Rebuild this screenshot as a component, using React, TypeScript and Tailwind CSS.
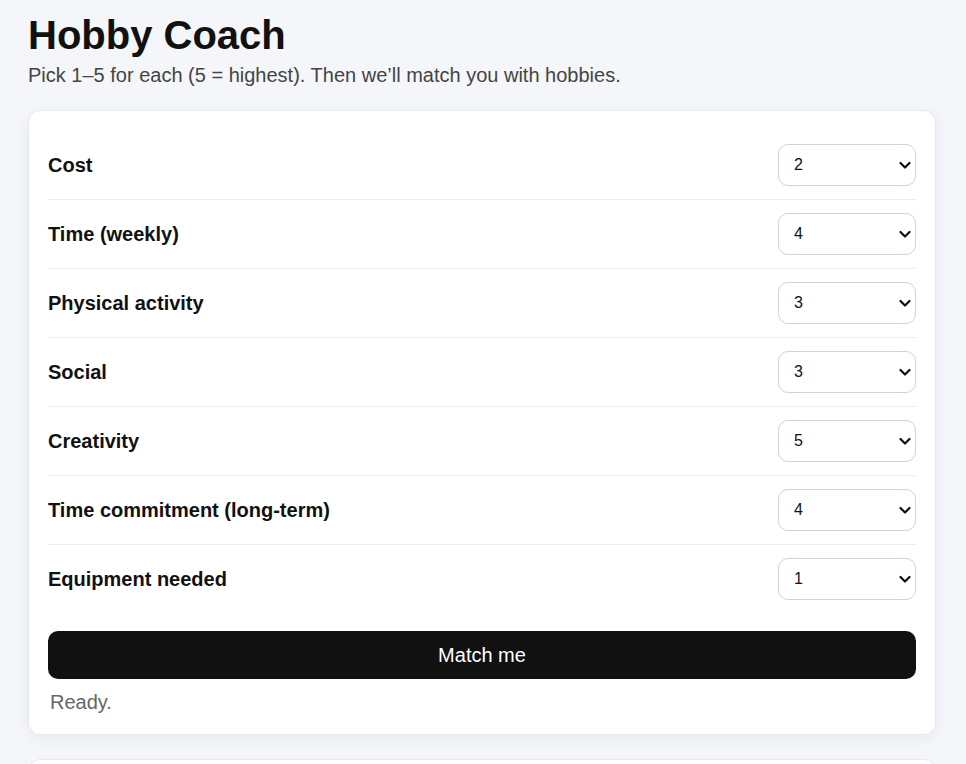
import React, { useState } from 'react';

const criteria: { label: string; value: string }[] = [
  { label: 'Cost', value: '2' },
  { label: 'Time (weekly)', value: '4' },
  { label: 'Physical activity', value: '3' },
  { label: 'Social', value: '3' },
  { label: 'Creativity', value: '5' },
  { label: 'Time commitment (long-term)', value: '4' },
  { label: 'Equipment needed', value: '1' },
];

export default function App() {
  const [values, setValues] = useState(criteria.map((c) => c.value));

  return (
    <div className="min-h-screen bg-[#f5f6fa] font-['Liberation_Sans',Arial,sans-serif] text-[#111]">
      <div className="px-[28px] pt-[12px]">
        <h1 className="text-[40px] font-bold leading-[46px]">Hobby Coach</h1>
        <p className="text-[20px] leading-[24px] text-[#444] mt-[5px]">
          Pick 1–5 for each (5 = highest). Then we’ll match you with hobbies.
        </p>

        {/* Preferences card */}
        <div className="mt-[23px] w-[908px] bg-white border border-[#e6e8ef] rounded-[12px] shadow-[0_4px_14px_rgba(20,30,60,0.06)] px-[19px] pt-[20px] pb-[19px]">
          <div>
            {criteria.map((c, i) => (
              <div
                key={c.label}
                className="flex items-center justify-between py-[13px] border-b border-[#eceef3] last:border-b-0"
              >
                <span className="text-[20px] font-bold">{c.label}</span>
                <div className="relative">
                  <select
                    value={values[i]}
                    onChange={(e) => {
                      const next = [...values];
                      next[i] = e.target.value;
                      setValues(next);
                    }}
                    className="appearance-none w-[138px] h-[42px] rounded-[10px] border border-[#cfd2e0] bg-white pl-[15px] pr-[30px] text-[16px] text-[#111]"
                  >
                    {['1', '2', '3', '4', '5'].map((n) => (
                      <option key={n} value={n}>
                        {n}
                      </option>
                    ))}
                  </select>
                  <svg
                    className="pointer-events-none absolute right-[5px] top-[16px]"
                    width="12"
                    height="10"
                    viewBox="0 0 12 10"
                    fill="none"
                  >
                    <path d="M1.5 3l4.5 4.5L10.5 3" stroke="#111" strokeWidth="2.2" strokeLinecap="round" strokeLinejoin="round" />
                  </svg>
                </div>
              </div>
            ))}
          </div>

          <button className="mt-[18px] w-full h-[48px] rounded-[10px] bg-[#111] text-white text-[20px]">
            Match me
          </button>
          <p className="mt-[10px] pl-[2px] text-[20px] leading-[26px] text-[#666]">Ready.</p>
        </div>

        <div className="mt-[24px] w-[908px] h-[40px] bg-white border border-[#e6e8ef] rounded-[12px]" />
      </div>
    </div>
  );
}
